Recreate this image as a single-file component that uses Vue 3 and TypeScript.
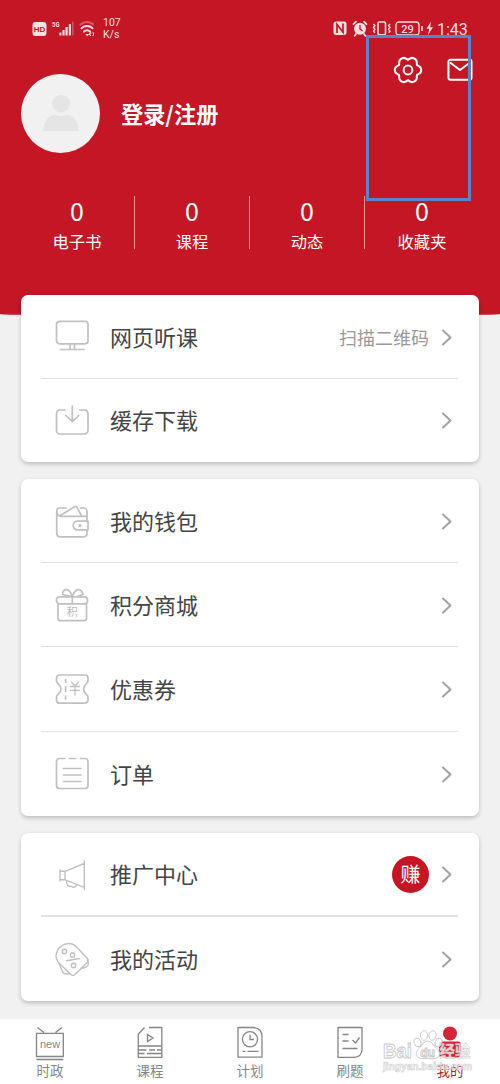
<script setup lang="ts">
interface Stat {
  label: string
  count: number
}
interface Row {
  icon: string
  title: string
  note?: string
  badge?: string
}
interface Tab {
  icon: string
  label: string
  active?: boolean
}

const stats: Stat[] = [
  { label: '电子书', count: 0 },
  { label: '课程', count: 0 },
  { label: '动态', count: 0 },
  { label: '收藏夹', count: 0 },
]

const groups: Row[][] = [
  [
    { icon: 'monitor', title: '网页听课', note: '扫描二维码' },
    { icon: 'download', title: '缓存下载' },
  ],
  [
    { icon: 'wallet', title: '我的钱包' },
    { icon: 'gift', title: '积分商城' },
    { icon: 'coupon', title: '优惠券' },
    { icon: 'order', title: '订单' },
  ],
  [
    { icon: 'horn', title: '推广中心', badge: '赚' },
    { icon: 'activity', title: '我的活动' },
  ],
]

const tabs: Tab[] = [
  { icon: 'news', label: '时政' },
  { icon: 'course', label: '课程' },
  { icon: 'plan', label: '计划' },
  { icon: 'quiz', label: '刷题' },
  { icon: 'mine', label: '我的', active: true },
]
</script>

<template>
  <div class="page">
    <header class="header">
      <div class="status">
        <svg class="status-left" width="62" height="24" viewBox="0 0 62 24">
          <rect x="0.500" y="6" width="14" height="14" rx="3" fill="#fbdfe2" />
          <text x="7.500" y="16.300" class="hd" text-anchor="middle">HD</text>
          <text x="20" y="11" class="five-g" textLength="7.500" lengthAdjust="spacingAndGlyphs">5G</text>
          <g fill="#fbdfe2">
            <rect x="27.300" y="16.500" width="2.200" height="3" rx="0.600" />
            <rect x="30.400" y="14" width="2.200" height="5.500" rx="0.600" />
            <rect x="33.500" y="11" width="2.200" height="8.500" rx="0.600" />
            <rect x="36.800" y="8" width="2.200" height="11.500" rx="0.600" />
            <rect x="40" y="5.500" width="1.600" height="14" rx="0.600" opacity="0.300" />
          </g>
          <g fill="none" stroke="#fbdfe2" stroke-width="2" stroke-linecap="round">
            <path d="M48.500 8.500a10 10 0 0 1 13 0" opacity="0.350" />
            <path d="M49.500 12.200a8 8 0 0 1 11 0" />
            <path d="M52 15.600a4.500 4.500 0 0 1 6 0" />
          </g>
          <path d="M53.300 17.900h4l-2 2.300z" fill="#fbdfe2" />
          <path d="M58.800 16.400l-1.300 1.800 1.300 1.800M60.800 16.400l1 1.800-1 1.800" fill="none" stroke="#fbdfe2" stroke-width="1.200" />
        </svg>
        <div class="speed"><span>107</span><span>K/s</span></div>
        <svg class="status-right" width="102" height="20" viewBox="0 0 102 20">
          <rect x="1.500" y="3.500" width="13" height="13.500" rx="2.500" fill="#fbdfe2" />
          <path d="M5 15V6.300l6 8V5.500" fill="none" stroke="#c51625" stroke-width="1.700" />
          <circle cx="28" cy="10.800" r="6" fill="#fbdfe2" />
          <path d="M21.500 6.200l2.500-2.500M34.500 6.200l-2.500-2.500M24 16l-1.300 1.700M32 16l1.300 1.700" stroke="#fbdfe2" stroke-width="1.800" stroke-linecap="round" />
          <path d="M28 7v4l2.500 2" fill="none" stroke="#c51625" stroke-width="1.400" />
          <rect x="46" y="4" width="7.500" height="12.800" rx="1.500" fill="none" stroke="#fbdfe2" stroke-width="1.600" />
          <path d="M41.500 6l1.400 1.700-1.400 1.800 1.400 1.800-1.400 1.900 1.400 1.600M58 6l-1.400 1.700L58 9.500l-1.400 1.800 1.400 1.900-1.400 1.600" fill="none" stroke="#fbdfe2" stroke-width="1.400" />
          <rect x="64" y="4" width="23" height="13" rx="3" fill="none" stroke="#fbdfe2" stroke-width="1.300" />
          <text x="75.500" y="14.700" text-anchor="middle" class="battery">29</text>
          <path d="M90 8v5" stroke="#fbdfe2" stroke-width="1.600" />
          <path d="M99 3.500l-4.500 7.300h2.700L96 17l5-7.800h-2.800z" fill="#fbdfe2" />
        </svg>
        <span class="clock">1:43</span>
      </div>

      <div class="actions">
        <svg width="30" height="30" viewBox="-15 -15 30 30" fill="none" stroke="#fff" stroke-width="2" stroke-linecap="round">
          <path
            v-for="n in 6"
            :key="n"
            d="M9-5.200C10.500-3.300 13.200-4.300 13.200 0S10.500 3.300 9 5.200"
            :transform="`rotate(${n * 60})`"
          />
          <circle r="4.400" />
        </svg>
        <svg class="mail" width="26" height="24" viewBox="0 0 26 24" fill="none" stroke="#fff" stroke-width="2" stroke-linejoin="round">
          <rect x="1.500" y="1.800" width="23" height="20" rx="2" />
          <path d="M3 4.500l10 7.500L23 4.500" />
        </svg>
      </div>

      <div class="profile">
        <div class="avatar">
          <svg width="38" height="38" viewBox="0 0 38 38" fill="#e5e5e5">
            <circle cx="19" cy="9.500" r="9" />
            <path d="M1 37c.5-9 5-15 12-16.500q6 3 12 0C32 22 36.500 28 37 37z" />
          </svg>
        </div>
        <span class="login">登录/注册</span>
      </div>

      <div class="stats">
        <div v-for="s in stats" :key="s.label" class="stat">
          <span class="count">{{ s.count }}</span>
          <span class="stat-label">{{ s.label }}</span>
        </div>
      </div>
      <div class="highlight"></div>
    </header>

    <main class="cards">
      <section v-for="(group, gi) in groups" :key="gi" class="card">
        <div v-for="row in group" :key="row.title" class="row">
          <svg class="row-icon" width="40" height="40" viewBox="0 0 40 40">
            <g v-if="row.icon === 'monitor'">
              <rect x="4.500" y="4.300" width="31.500" height="22.500" rx="3" />
              <path d="M18 27v5M22.500 27v5M8.500 32.500h23.500" />
            </g>
            <g v-else-if="row.icon === 'download'">
              <path d="M13 9H8a3.500 3.500 0 0 0-3.500 3.500v17A3.500 3.500 0 0 0 8 33h24.500a3.500 3.500 0 0 0 3.500-3.500v-17A3.500 3.500 0 0 0 32.500 9h-5M20.300 5v15.500M13.800 14.500l6.500 6.200 6.500-6.200" />
            </g>
            <g v-else-if="row.icon === 'wallet'">
              <path d="M35 19v-9.500a3.500 3.500 0 0 0-3.500-3.500h-3M14 6H8a3.300 3.300 0 0 0-3.300 3.300v22.200A3.300 3.300 0 0 0 8 34.800h24a3 3 0 0 0 3-3v-3.500M5 10q0 4.300 4 4.300h26M7.500 14L22.500 4.800q1.500-.8 2.500.5l4.500 8.500" />
              <path d="M36 19.200H25.500a4.300 4.300 0 0 0 0 8.600H36z" />
              <circle cx="28" cy="23.500" r="0.700" />
            </g>
            <g v-else-if="row.icon === 'gift'">
              <rect x="4.500" y="10.800" width="31" height="7" rx="3" />
              <path d="M6 18v14.200a2.500 2.500 0 0 0 2.500 2.500h23.500a2.500 2.500 0 0 0 2.500-2.500V18M20.300 10.500V18M20 10.500L10.500 8.500Q11 3.500 14.500 3.700T20.300 10.500Q22.500 4.500 26 3.700t5 4.800l-6 2" />
              <text x="20.300" y="30" text-anchor="middle" class="gift-text">积</text>
            </g>
            <g v-else-if="row.icon === 'coupon'">
              <path d="M7.500 5h25.500q3 0 3 3v3q0 1.500-1.800 2.800c-3.500 3-3.500 7.500 0 10.500q1.800 1.300 1.800 2.800v3q0 3-3 3H7.500q-3 0-3-3v-3q0-1.500 1.800-2.800c3.500-3 3.500-7.500 0-10.500Q4.500 12.500 4.500 11V8q0-3 3-3z" />
              <path d="M13.600 9.800v2.700M13.600 16.500v5M13.600 26v3" />
              <path d="M19.500 12l3.500 4 3.500-4M18.500 16.500h9M18.500 20.300h9M23 16.500v8.500" stroke-width="1.300" />
            </g>
            <g v-else-if="row.icon === 'order'">
              <path d="M12.500 4.500H7.500a3 3 0 0 0-3 3v24a3 3 0 0 0 3 3H33a3 3 0 0 0 3-3v-24a3 3 0 0 0-3-3h-4.500M17.500 4.500h6M11.500 14.500h17.500M11.500 21h17.500M11.500 27.500h17.500" />
            </g>
            <g v-else-if="row.icon === 'horn'" class="thin">
              <path d="M32.300 6v28.500M8 15v11M8 16.300h5v8.500H8M13 16.300L32.300 8.500M13 24.800l19.300 7.500M14.500 25.500c-.5 4 2 6.500 5 6 2 1.500 4.500.5 5.500-2" />
            </g>
            <g v-else class="thin">
              <path d="M10 5.500q5-3 10-1.500 2.500.8 4.500 3L34.500 17.500q2.500 2.500 1 4.500L22.500 35q-1.500 1-3 0L6.500 22.500Q3 18 4.500 13T10 5.500z" />
              <path d="M7 23.500l3.500 8q1 2.500 3.500 2.500l4-.2M36 20l.3 3q.3 2.500-2 4l-5 1.500" />
              <circle cx="12.500" cy="11.500" r="2.200" />
              <circle cx="20.500" cy="15" r="2.200" />
              <circle cx="21.500" cy="25.500" r="2.200" />
              <path d="M14.500 20.700l13-2.200" />
            </g>
          </svg>
          <span class="title">{{ row.title }}</span>
          <span v-if="row.note" class="note">{{ row.note }}</span>
          <span v-if="row.badge" class="badge">{{ row.badge }}</span>
          <svg class="chevron" width="12" height="18" viewBox="0 0 12 18">
            <path d="M2 2.500l7.500 7L2 16.500" />
          </svg>
        </div>
      </section>
    </main>

    <nav class="tabbar">
      <div v-for="tab in tabs" :key="tab.label" class="tab" :class="{ active: tab.active }">
        <svg class="tab-icon" width="32" height="36" viewBox="0 0 32 36">
          <g v-if="tab.icon === 'news'">
            <path d="M3.500 1.500L10 6.500M28 1.500L21.500 6.500M2.500 7.300h26.800v23.200H2.500zM2.500 33.500h26.800" />
            <text x="16" y="22" text-anchor="middle" class="new-text">new</text>
          </g>
          <g v-else-if="tab.icon === 'course'">
            <path d="M10.500 1.500L4.300 8v23.300h23.500V1.500H15M13.500 8.500v7l5.500-3.500zM4.500 20h23M4.500 24h8M15 24h6M23 24h4.500M4.500 27.500h6M13 27.500h14.500" />
          </g>
          <g v-else-if="tab.icon === 'plan'">
            <path d="M4 1.500h15.500q8.500.5 8.500 9v20.700H4z" />
            <circle cx="16" cy="13.300" r="7.600" />
            <path d="M16 8.500v5h4M8.500 25.300h3M13.500 25.300h11" />
          </g>
          <g v-else-if="tab.icon === 'quiz'">
            <path d="M4 1.500h24v22.500q-.5 7-8 7.300H4zM8.500 8.500h6M8.500 15h6M18.500 14l3 3 4-5.500M8.500 22.500h15" />
          </g>
          <g v-else class="person">
            <circle cx="16" cy="7.500" r="7" />
            <rect x="5" y="15.500" width="22" height="16" rx="3" />
          </g>
        </svg>
        <span>{{ tab.label }}</span>
      </div>
      <svg class="watermark" width="96" height="46" viewBox="0 0 96 46">
        <g class="mark">
          <text x="3" y="29.500" class="mark-latin" textLength="29" lengthAdjust="spacingAndGlyphs">Bai</text>
          <ellipse cx="37.500" cy="14.500" rx="3.300" ry="4.500" transform="rotate(-20 37.500 14.500)" />
          <ellipse cx="44" cy="7.500" rx="3.600" ry="4.800" />
          <ellipse cx="52.500" cy="7.500" rx="3.600" ry="4.800" transform="rotate(10 52.500 7.500)" />
          <ellipse cx="58.500" cy="14.500" rx="3.300" ry="4.500" transform="rotate(20 58.500 14.500)" />
          <path d="M47.500 13q4 0 6 4l5 5q3 5.500-2 8.300-3 1-9 0-6 1-9-.5-4-3-1-7.800l4.500-5q2-4 5.500-4z" />
          <text x="47.500" y="28.500" text-anchor="middle" class="mark-du">du</text>
          <text x="59.500" y="28.500" class="mark-cn" textLength="31" lengthAdjust="spacingAndGlyphs">经验</text>
        </g>
        <text x="3" y="41.500" class="mark-url" textLength="89" lengthAdjust="spacingAndGlyphs">jingyan.baidu.com</text>
      </svg>
    </nav>
  </div>
</template>

<style>
body {
  margin: 0;
}
</style>

<style scoped>
.page {
  width: 500px;
  height: 1084px;
  overflow: hidden;
  display: flex;
  flex-direction: column;
  background: #f1f1f1;
  font-family: "Noto Sans CJK SC", "Noto Sans", sans-serif;
}
.header {
  position: relative;
  height: 316px;
  flex: none;
  box-sizing: border-box;
  background: #c51625;
  border-radius: 0 0 50% 50% / 0 0 2px 2px;
  color: #fff;
}
.status {
  display: flex;
  align-items: center;
  height: 56px;
  padding: 0 32px;
  color: #fbdfe2;
}
.hd {
  font: bold 8px "Liberation Sans", sans-serif;
  fill: #c51625;
}
.five-g {
  font: bold 8px Roboto, sans-serif;
  fill: #fbdfe2;
}
.battery {
  font: 500 11px Roboto, sans-serif;
  fill: #fbdfe2;
}
.speed {
  display: flex;
  flex-direction: column;
  margin-left: 9px;
  margin-top: 2px;
  font: 10.500px/12.500px Roboto, sans-serif;
}
.status-right {
  margin-left: auto;
}
.clock {
  margin-left: 3px;
  margin-top: 3px;
  width: 31px;
  font: 16px/20px Roboto, sans-serif;
  white-space: nowrap;
}
.actions {
  display: flex;
  align-items: center;
  justify-content: flex-end;
  height: 28px;
  padding-right: 27.500px;
  gap: 24px;
}
.profile {
  display: flex;
  align-items: center;
  height: 80px;
  margin-top: -11px;
  padding-left: 21px;
  gap: 21px;
}
.avatar {
  width: 79px;
  height: 79px;
  border-radius: 50%;
  background: #f1f1f1;
  display: flex;
  align-items: center;
  justify-content: center;
}
.login {
  font-size: 22.200px;
  line-height: 32px;
  font-weight: 700;
}
.stats {
  display: flex;
  margin: 43px 0 0 20px;
}
.stat {
  box-sizing: border-box;
  width: 115px;
  height: 53px;
  display: flex;
  flex-direction: column;
  align-items: center;
  border-right: 1px solid #ea9299;
}
.stat:last-child {
  border-right-color: transparent;
}
.count {
  margin-top: -2px;
  font-size: 25px;
  line-height: 32px;
}
.stat-label {
  font-size: 16.300px;
  line-height: 24px;
  margin-top: 3px;
}
.highlight {
  position: absolute;
  left: 366px;
  top: 35px;
  width: 105px;
  height: 166px;
  box-sizing: border-box;
  border: 3px solid #5685cd;
}
.cards {
  position: relative;
  flex: 1;
  margin-top: -21px;
  padding: 0 21px;
  display: flex;
  flex-direction: column;
  gap: 17px;
}
.card {
  background: #fff;
  border-radius: 7px;
  padding: 0 21px 0 20px;
  box-shadow: 0 2px 4px rgba(0, 0, 0, 0.22);
}
.card:first-child .row {
  height: 83.500px;
}
.row {
  box-sizing: border-box;
  height: 84.200px;
  display: flex;
  align-items: center;
  padding: 1px 5px 0 11px;
  border-bottom: 1px solid #e2e2e2;
}
.row:last-child {
  border-bottom-color: transparent;
}
.card:last-child .row:first-child {
  border-bottom: 2px solid #e2e2e2;
}
.row-icon {
  margin-top: 1px;
  fill: none;
  stroke: #c0c0c0;
  stroke-width: 1.700;
  stroke-linecap: round;
  stroke-linejoin: round;
}
.thin {
  stroke-width: 1.400;
}
.gift-text {
  font: 11px "Noto Sans CJK SC", sans-serif;
  fill: #b8b8b8;
  stroke: none;
}
.title {
  margin: -2px 0 0 18px;
  font-size: 22px;
  line-height: 32px;
  color: #444;
}
.note {
  margin-left: auto;
  font-size: 18px;
  line-height: 26px;
  color: #999;
}
.badge {
  margin-left: auto;
  width: 37px;
  height: 37px;
  border-radius: 50%;
  background: #c51625;
  color: #fff;
  font-size: 20px;
  line-height: 36px;
  text-align: center;
}
.chevron {
  margin-left: auto;
  fill: none;
  stroke: #a2a2a2;
  stroke-width: 2;
  stroke-linecap: round;
  stroke-linejoin: round;
}
.note + .chevron,
.badge + .chevron {
  margin-left: 12px;
}
.tabbar {
  position: relative;
  flex: none;
  height: 65px;
  display: flex;
  background: #fff;
}
.tab {
  flex: 1;
  display: flex;
  flex-direction: column;
  align-items: center;
  padding-top: 7px;
  color: #858585;
  font-size: 13.500px;
  line-height: 17px;
}
.tab-icon {
  fill: none;
  stroke: #858585;
  stroke-width: 1.300;
}
.tab.active {
  color: #b5202d;
}
.person {
  fill: #d32638;
  stroke: none;
}
.new-text {
  font: 11px "Liberation Sans", sans-serif;
  fill: #858585;
  stroke: none;
}
.watermark {
  position: absolute;
  left: 380px;
  top: 9px;
}
.mark {
  fill: rgba(255, 255, 255, 0.8);
  stroke: #c6c6c6;
  stroke-width: 0.900;
}
.mark-latin {
  font: bold 21px "Liberation Sans", sans-serif;
}
.mark-du {
  font: bold 12px "Liberation Sans", sans-serif;
}
.mark-cn {
  font: bold 16px "Noto Sans CJK SC", sans-serif;
  stroke-width: 0.500;
}
.mark-url {
  font: bold 10px "Liberation Sans", sans-serif;
  fill: rgba(255, 255, 255, 0.6);
  stroke: #cfcfcf;
  stroke-width: 0.600;
}
</style>
